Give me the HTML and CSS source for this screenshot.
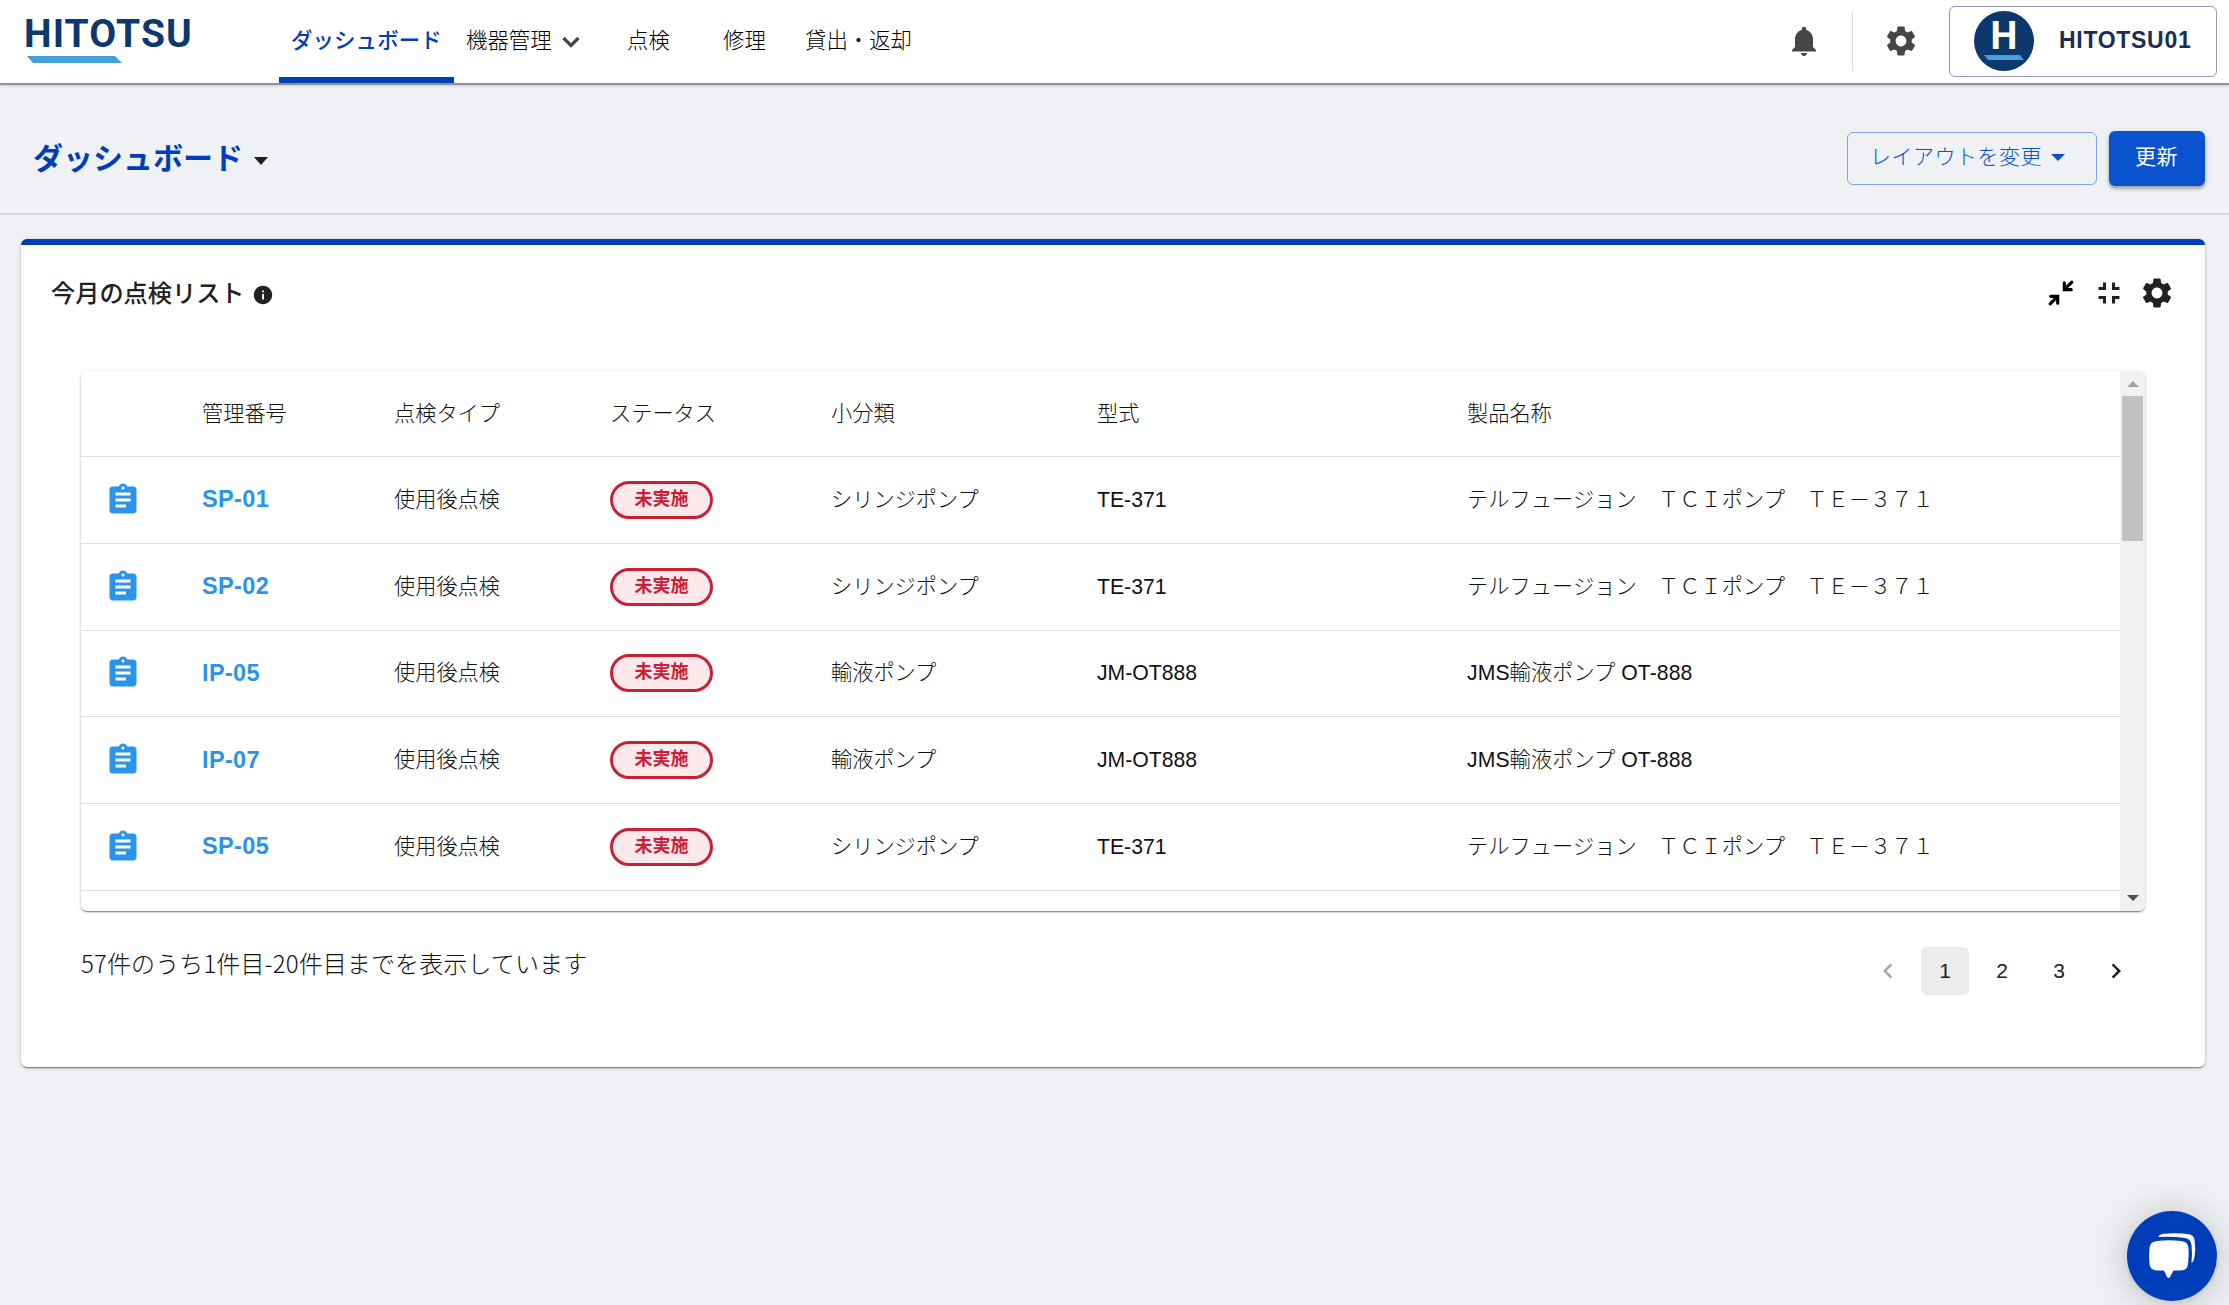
FILE: index.html
```html
<!DOCTYPE html>
<html lang="ja">
<head>
<meta charset="utf-8">
<title>HITOTSU ダッシュボード</title>
<link rel="stylesheet" href="styles.css">
</head>
<body>
<svg class="sprite" aria-hidden="true">
  <symbol id="gear" viewBox="0 0 24 24"><path d="M19.14 12.94c.04-.3.06-.61.06-.94 0-.32-.02-.64-.07-.94l2.03-1.58c.18-.14.23-.41.12-.61l-1.92-3.32c-.12-.22-.37-.29-.59-.22l-2.39.96c-.5-.38-1.03-.7-1.62-.94l-.36-2.54c-.04-.24-.24-.41-.48-.41h-3.84c-.24 0-.43.17-.47.41l-.36 2.54c-.59.24-1.13.57-1.62.94l-2.39-.96c-.22-.08-.47 0-.59.22L2.74 8.87c-.12.21-.08.47.12.61l2.03 1.58c-.05.3-.09.63-.09.94s.02.64.07.94l-2.03 1.58c-.18.14-.23.41-.12.61l1.92 3.32c.12.22.37.29.59.22l2.39-.96c.5.38 1.03.7 1.62.94l.36 2.54c.05.24.24.41.48.41h3.84c.24 0 .44-.17.47-.41l.36-2.54c.59-.24 1.13-.56 1.62-.94l2.39.96c.22.08.47 0 .59-.22l1.92-3.32c.12-.22.07-.47-.12-.61l-2.01-1.58zM12 15.6c-1.98 0-3.6-1.62-3.6-3.6s1.62-3.6 3.6-3.6 3.6 1.62 3.6 3.6-1.62 3.6-3.6 3.6z"/></symbol>
  <symbol id="clip" viewBox="0 0 24 24"><path d="M19 3h-4.18C14.4 1.84 13.3 1 12 1c-1.3 0-2.4.84-2.82 2H5c-1.1 0-2 .9-2 2v14c0 1.1.9 2 2 2h14c1.1 0 2-.9 2-2V5c0-1.1-.9-2-2-2zm-7 0c.55 0 1 .45 1 1s-.45 1-1 1-1-.45-1-1 .45-1 1-1zm2 14H7v-2h7v2zm3-4H7v-2h10v2zm0-4H7V7h10v2z"/></symbol>
</svg>

<header class="topbar">
  <a class="logo">
    <span class="logo-text">HITOTSU</span>
    <svg class="logo-bar" viewBox="0 0 95 7"><path d="M0 0h88l7 7H6z"/></svg>
  </a>
  <nav class="nav">
    <a class="nav-item active">ダッシュボード</a>
    <a class="nav-item menu">機器管理
      <svg class="chevron" viewBox="0 0 18 12"><path d="M1.5 2 9 9.5 16.5 2"/></svg></a>
    <a class="nav-item check">点検</a>
    <a class="nav-item repair">修理</a>
    <a class="nav-item">貸出・返却</a>
  </nav>
  <div class="tools">
    <svg class="icon" viewBox="0 0 24 24"><path d="M12 22c1.1 0 2-.9 2-2h-4c0 1.1.89 2 2 2zm6-6v-5c0-3.07-1.64-5.64-4.5-6.32V4c0-.83-.67-1.5-1.5-1.5s-1.5.67-1.5 1.5v.68C7.63 5.36 6 7.92 6 11v5l-2 2v1h16v-1l-2-2z"/></svg>
    <span class="divider"></span>
    <svg class="icon"><use href="#gear"/></svg>
    <button class="account">
      <span class="avatar"><span class="avatar-letter">H</span><svg class="avatar-bar" viewBox="0 0 40 5"><path d="M0 0h36l4 5H4z"/></svg></span>
      <span class="account-name">HITOTSU01</span>
    </button>
  </div>
</header>

<section class="pagehead">
  <h1 class="page-title">ダッシュボード<span class="caret"></span></h1>
  <div class="actions">
    <button class="btn outline">レイアウトを変更<span class="caret blue"></span></button>
    <button class="btn solid">更新</button>
  </div>
</section>

<main class="card">
  <div class="card-head">
    <h2 class="card-title">今月の点検リスト
      <svg class="info" viewBox="0 0 24 24"><path d="M12 2C6.48 2 2 6.48 2 12s4.48 10 10 10 10-4.48 10-10S17.52 2 12 2zm1 15h-2v-6h2v6zm0-8h-2V7h2v2z"/></svg></h2>
    <div class="card-tools">
      <svg class="icon shrink" viewBox="0 0 36 36"><path d="M28.800 7.200 21.300 14.700M21.300 7.800v6.900h6.900M7.200 28.800 14.700 21.300M7.800 21.300h6.900v6.900"/></svg>
      <svg class="icon" viewBox="0 0 24 24"><path d="M5 16h3v3h2v-5H5v2zm3-8H5v2h5V5H8v3zm6 11h2v-3h3v-2h-5v5zm2-11V5h-2v5h5V8h-3z"/></svg>
      <svg class="icon"><use href="#gear"/></svg>
    </div>
  </div>

  <div class="table-wrap">
    <div class="table">
      <div class="row head"><span></span><span>管理番号</span><span>点検タイプ</span><span>ステータス</span><span>小分類</span><span>型式</span><span>製品名称</span></div>
      <div class="row"><svg class="icon clip"><use href="#clip"/></svg><a class="id">SP-01</a><span>使用後点検</span><span class="badge">未実施</span><span>シリンジポンプ</span><span>TE-371</span><span class="wide">テルフュージョン　ＴＣＩポンプ　ＴＥ－３７１</span></div>
      <div class="row"><svg class="icon clip"><use href="#clip"/></svg><a class="id">SP-02</a><span>使用後点検</span><span class="badge">未実施</span><span>シリンジポンプ</span><span>TE-371</span><span class="wide">テルフュージョン　ＴＣＩポンプ　ＴＥ－３７１</span></div>
      <div class="row"><svg class="icon clip"><use href="#clip"/></svg><a class="id">IP-05</a><span>使用後点検</span><span class="badge">未実施</span><span>輸液ポンプ</span><span>JM-OT888</span><span class="wide">JMS輸液ポンプ OT-888</span></div>
      <div class="row"><svg class="icon clip"><use href="#clip"/></svg><a class="id">IP-07</a><span>使用後点検</span><span class="badge">未実施</span><span>輸液ポンプ</span><span>JM-OT888</span><span class="wide">JMS輸液ポンプ OT-888</span></div>
      <div class="row"><svg class="icon clip"><use href="#clip"/></svg><a class="id">SP-05</a><span>使用後点検</span><span class="badge">未実施</span><span>シリンジポンプ</span><span>TE-371</span><span class="wide">テルフュージョン　ＴＣＩポンプ　ＴＥ－３７１</span></div>
    </div>
    <div class="scrollbar"><span class="arrow up"></span><span class="thumb"></span><span class="arrow down"></span></div>
  </div>

  <div class="card-foot">
    <p class="summary">57件のうち1件目-20件目までを表示しています</p>
    <nav class="pager">
      <span class="page off"><svg class="pg" viewBox="0 0 24 24"><path d="M15.41 7.41 14 6l-6 6 6 6 1.410-1.410L10.830 12z"/></svg></span>
      <span class="page current">1</span><span class="page">2</span><span class="page">3</span>
      <span class="page"><svg class="pg" viewBox="0 0 24 24"><path d="M10 6 8.590 7.410 13.170 12l-4.580 4.590L10 18l6-6z"/></svg></span>
    </nav>
  </div>
</main>

<button class="chat"><svg viewBox="0 0 90 90"><path d="M30 30Q42 28.500 54 30Q61 30.500 61.500 37Q62 45 61 53Q60.500 59 54 59.500H46.500L43 66Q41.500 68 40 66L37 59.500H30Q23 59 22.500 53Q21.500 45 22.500 37Q23 30.500 30 30Z"/><path d="M31 26Q33 23 37 22.800Q50 21.500 60 23Q67 23.500 67.500 29Q69 38 67.500 46Q67 50 64.500 52Q65.500 42 64.500 34Q64 28 58 27Q45 25 31 26Z"/></svg></button>
</body>
</html>
```
FILE: styles.css
```css
* { box-sizing: border-box; }
body {
  margin: 0;
  height: 1305px;
  overflow: hidden;
  background: #eff1f5;
  color: #212121;
  font-family: "Liberation Sans", "Noto Sans CJK JP", sans-serif;
  font-size: 21px;
  line-height: 1.5;
}
button { font: inherit; cursor: pointer; }
svg { display: block; fill: currentColor; }
.sprite { position: absolute; width: 0; height: 0; }
.icon { width: 36px; height: 36px; flex: none; }

.topbar {
  position: relative;
  height: 83px;
  display: flex;
  align-items: stretch;
  padding: 0 12px 0 24px;
  background: #fff;
  box-shadow: 0 1px 1px 1px rgba(60, 60, 70, .45), 0 3px 4px rgba(0, 0, 0, .12);
}
.logo { width: 255px; padding-top: 14px; }
.logo-text {
  display: block;
  height: 42px;
  font: 700 39px/40px Roboto, sans-serif;
  letter-spacing: 1.1px;
  color: #0d386e;
}
.logo-bar { width: 95px; height: 7px; margin-left: 3px; fill: #459fd9; }
.nav { display: flex; font-size: 21.4px; font-weight: 300; color: #000; }
.nav-item { display: flex; align-items: center; white-space: nowrap; padding-bottom: 1px; }
.nav-item.active {
  width: 175px;
  margin-right: 12px;
  padding-left: 12px;
  padding-bottom: 0;
  padding-top: 5px;
  border-bottom: 6px solid #003db8;
  color: #003db8;
  font-weight: 500;
  letter-spacing: .15px;
}
.nav-item.menu { width: 161px; }
.chevron { width: 18px; height: 12px; margin: 1px 0 0 10px; fill: none; stroke: #45464a; stroke-width: 3.2; }
.nav-item.check { width: 96px; }
.nav-item.repair { width: 82px; }
.tools { display: flex; align-items: center; margin-left: auto; padding-bottom: 1px; color: #45464a; }
.divider { width: 1px; height: 60px; margin: 0 30px; background: #d9dadd; }
.account {
  display: flex;
  align-items: center;
  width: 268px;
  height: 71px;
  margin-left: 30px;
  padding: 0 0 1px 24px;
  background: #fff;
  border: 1px solid #8f9aae;
  border-radius: 6px;
}
.avatar {
  display: flex;
  flex-direction: column;
  align-items: center;
  width: 60px;
  height: 60px;
  margin-right: 25px;
  padding-top: 7px;
  border-radius: 50%;
  background: #0d386e;
}
.avatar-letter { font: 700 38px/36px Roboto, sans-serif; height: 37px; color: #fff; }
.avatar-bar { width: 40px; height: 5px; fill: #459fd9; }
.account-name { font-size: 23px; font-weight: 700; letter-spacing: .7px; color: #1b2d50; }

.pagehead {
  height: 132px;
  display: flex;
  align-items: center;
  justify-content: space-between;
  padding: 20px 24px 0 33px;
  border-bottom: 2px solid #d4d5d9;
}
.page-title {
  display: flex;
  align-items: center;
  margin: 0;
  padding-top: 1px;
  font-size: 30px;
  font-weight: 700;
  line-height: 40px;
  color: #003db8;
}
.caret {
  margin: 4px 0 0 11px;
  border: 7px solid transparent;
  border-top: 8px solid #212121;
  border-bottom: 0;
}
.caret.blue { border-top-color: #0b53ce; border-top-width: 7px; margin: 2px 0 0 9px; }
.actions { display: flex; align-items: center; gap: 12px; }
.btn {
  display: flex;
  align-items: center;
  height: 53px;
  padding: 0 0 3px 26px;
  border-radius: 6px;
  font-size: 21px;
  letter-spacing: .4px;
}
.btn.outline { width: 250px; padding-left: 22px; background: none; border: 1px solid #7fa4e3; color: #0b53ce; font-weight: 300; letter-spacing: .5px; }
.btn.solid {
  width: 96px;
  height: 55px;
  background: #0b53ce;
  border: 0;
  color: #fff;
  box-shadow: 0 3px 3px rgba(0, 0, 0, .25), 0 1px 6px rgba(0, 0, 0, .14);
}

.card {
  width: 2184px;
  height: 828px;
  margin: 24px 0 0 21px;
  padding: 0 60px;
  background: #fff;
  border-top: 6px solid #003db8;
  border-radius: 6px;
  box-shadow: 0 2px 1px -1px rgba(0, 0, 0, .3), 0 1px 2px rgba(0, 0, 0, .25), 0 1px 5px rgba(0, 0, 0, .12);
}
.card-head {
  height: 126px;
  display: flex;
  justify-content: space-between;
  padding-top: 30px;
  margin: 0 -30px;
}
.card-title {
  display: flex;
  align-items: center;
  height: 39px;
  margin: 0;
  font-size: 24.2px;
  font-weight: 500;
}
.info { width: 22px; height: 22px; margin-left: 7px; }
.card-tools { display: flex; gap: 12px; height: 36px; }
.shrink { fill: none; stroke: #000; stroke-width: 3.2; stroke-linecap: round; }

.table-wrap {
  height: 540px;
  display: flex;
  border-radius: 6px;
  overflow: hidden;
  box-shadow: 0 2px 1px -1px rgba(0, 0, 0, .3), 0 1px 2px rgba(0, 0, 0, .25), 0 1px 4px rgba(0, 0, 0, .1);
}
.table { flex: 1; }
.row {
  display: grid;
  grid-template-columns: 97px 192px 216px 221px 266px 370px 1fr;
  align-items: center;
  height: 86.75px;
  padding-left: 24px;
  border-bottom: 1.500px solid #e0e0e0;
  white-space: nowrap;
  font-weight: 300;
  font-size: 21.2px;
  color: #111;
}
.row.head { height: 86px; }
.wide { letter-spacing: .08px; }
.clip { color: #2a94ea; }
.id { font-size: 23.500px; font-weight: 700; letter-spacing: .35px; color: #2a94ea; }
.badge {
  width: 103px;
  height: 38px;
  border: 3px solid #c92038;
  border-radius: 19px;
  background: #fde8ec;
  color: #c92038;
  font-size: 18px;
  font-weight: 700;
  line-height: 30px;
  text-align: center;
}
.scrollbar {
  width: 25px;
  display: flex;
  flex-direction: column;
  align-items: center;
  padding: 10px 0;
  background: #f1f1f1;
}
.thumb { width: 21px; height: 145px; margin-top: 9px; background: #c1c1c1; }
.arrow { border: 6px solid transparent; }
.arrow.up { border-top: 0; border-bottom-color: #a3a3a3; }
.arrow.down { margin-top: auto; border-bottom: 0; border-top-color: #505050; }

.card-foot { display: flex; justify-content: space-between; padding: 36px 5px 0 0; }
.summary { margin: -1px 0 0; font: 300 24px/34px "Noto Sans CJK JP", sans-serif; letter-spacing: .12px; color: #111; }
.pager { display: flex; gap: 9px; }
.page {
  width: 48px;
  height: 48px;
  display: flex;
  align-items: center;
  justify-content: center;
  border-radius: 6px;
}
.page.current { background: #ebebeb; }
.page.off { color: #a6a6a6; }
.pg { width: 30px; height: 30px; }

.chat {
  position: fixed;
  left: 2127px;
  top: 1211px;
  width: 90px;
  height: 90px;
  padding: 0;
  border: 0;
  border-radius: 50%;
  background: #003db8;
  color: #fff;
  box-shadow: 0 2px 9px rgba(0, 0, 0, .1), 0 3px 48px rgba(0, 0, 0, .2);
}
```
